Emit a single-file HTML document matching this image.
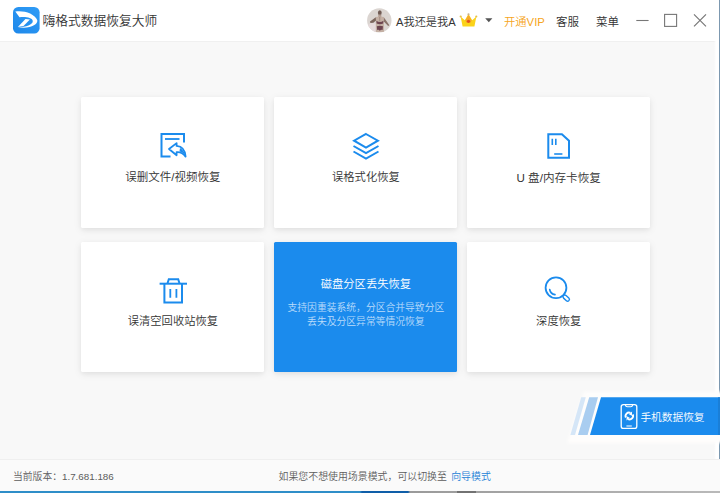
<!DOCTYPE html>
<html lang="zh-CN">
<head>
<meta charset="utf-8">
<title>嗨格式数据恢复大师</title>
<style>
html,body{margin:0;padding:0;}
body{width:720px;height:493px;overflow:hidden;position:relative;background:#f8f8f8;
 font-family:"Liberation Sans","Noto Sans CJK SC",sans-serif;color:#333;font-weight:350;}
.abs{position:absolute;}
.t{position:absolute;white-space:nowrap;line-height:1;}
#titlebar{left:0;top:0;width:720px;height:41px;background:#fff;border-bottom:1px solid #f0f0f0;}
.card{position:absolute;width:183px;height:130.5px;background:#fff;border-radius:1.5px;
 box-shadow:0 2px 9px rgba(0,0,0,0.075),0 2px 4px rgba(0,0,0,0.04);}
.card.blue{background:#1b8bed;}
.card.r2{height:129.9px;}
.ct{position:absolute;left:0;width:100%;text-align:center;font-size:11.3px;line-height:1;color:#333;white-space:nowrap;}
#footer{left:0;top:459px;width:720px;height:31px;background:#fafafa;border-top:1px solid #efefef;}
</style>
</head>
<body>

<!-- title bar -->
<div id="titlebar" class="abs"></div>
<svg class="abs" style="left:13px;top:7px" width="26.6" height="26.6" viewBox="0 0 100 100">
  <defs><linearGradient id="lg" x1="0" y1="1" x2="1" y2="0"><stop offset="0" stop-color="#1e88ea"/><stop offset="1" stop-color="#2f9cf6"/></linearGradient></defs>
  <rect x="0" y="0" width="100" height="100" rx="20" fill="url(#lg)"/>
  <g transform="translate(50,48) scale(1.06) translate(-50,-48)"><path d="M11,19 C40,14 80,26 89,50 C92,66 60,82 20,74 C50,73 73,66 73,52 C70,40 50,37 26,39 Z" fill="#fff"/>
  <path d="M47,45 L63,47 L40,70 L20,74 Z" fill="#fff"/></g>
</svg>
<div class="t" style="left:42.6px;top:14.9px;font-size:12.76px;color:#333;">嗨格式数据恢复大师</div>

<!-- avatar -->
<svg class="abs" style="left:367px;top:7.7px" width="25" height="25" viewBox="0 0 25 25">
  <defs><clipPath id="av"><circle cx="12.3" cy="12.4" r="12.2"/></clipPath>
  <filter id="bl" x="-20%" y="-20%" width="140%" height="140%"><feGaussianBlur stdDeviation="0.55"/></filter></defs>
  <g clip-path="url(#av)">
    <rect width="25" height="25" fill="#dbd5d1"/>
    <ellipse cx="6" cy="20" rx="6" ry="5" fill="#e6dadb"/>
    <g filter="url(#bl)">
      <ellipse cx="12.8" cy="4.7" rx="1.9" ry="2.5" fill="#6f5a52"/>
      <path d="M11.4,6.5 L14.2,6.5 L14.4,9 L11.2,9 Z" fill="#b09a8e"/>
      <path d="M8.8,9 Q12.8,7.8 16.8,9 L17,24 L8.8,24 Z" fill="#c4b0a4"/>
      <path d="M8.8,9.2 L3,13.4 L3.4,15 L6.4,14.8 L9,12.6 Z" fill="#7b655c"/>
      <path d="M16.8,9.2 L22.4,17.2 L21.2,18 L16.8,13.4 Z" fill="#8a736a"/>
      <path d="M9.4,12.8 Q12.8,15.2 16.4,12.8 L16.2,15.6 Q12.8,17 9.6,15.6 Z" fill="#6e4450"/>
      <path d="M9.8,18.2 Q12.8,17.4 16,18.2 L15.6,22 Q13.5,21.4 12.9,23 Q12.2,21.4 10.2,22 Z" fill="#6e4450"/>
      <path d="M12.5,9 L13.2,9 L13.1,13.5 L12.6,13.5 Z" fill="#8d756c"/>
    </g>
  </g>
</svg>
<div class="t" style="left:396px;top:16.5px;font-size:11.2px;color:#333;">A我还是我A</div>

<!-- crown -->
<svg class="abs" style="left:459px;top:13px" width="19" height="15" viewBox="0 0 19 15">
  <path d="M1.6,3.6 L5.8,7.2 L9.5,1 L13.2,7.2 L17.4,3.6 L15.4,13.6 L3.6,13.6 Z" fill="#fbd31a"/>
  <path d="M9.5,1.6 L12.6,7.6 L11.6,9.8 L7.4,9.8 L6.4,7.6 Z" fill="#f7a928"/>
  <circle cx="9.5" cy="8.3" r="1.6" fill="#e2531d"/>
  <circle cx="9.5" cy="1.3" r="1.1" fill="#c9b38a"/>
  <circle cx="1.7" cy="3.5" r="1.1" fill="#e6c04a"/>
  <circle cx="17.3" cy="3.5" r="1.1" fill="#e6c04a"/>
</svg>
<svg class="abs" style="left:485px;top:18.4px" width="8" height="5" viewBox="0 0 8 5"><path d="M0.2,0.3 L7.4,0.3 L3.8,4.2 Z" fill="#555"/></svg>

<div class="t" style="left:504px;top:16.5px;font-size:11.3px;color:#f6a522;">开通VIP</div>
<div class="t" style="left:556px;top:16.5px;font-size:11.5px;color:#333;">客服</div>
<div class="t" style="left:596px;top:16.5px;font-size:11.5px;color:#333;">菜单</div>

<!-- window buttons -->
<svg class="abs" style="left:629.5px;top:8px" width="84" height="26" viewBox="0 0 84 26">
  <path d="M6.3,12.5 H18.6" stroke="#777" stroke-width="1.1" fill="none"/>
  <rect x="34.6" y="6.4" width="12" height="12" stroke="#777" stroke-width="1.1" fill="none"/>
  <path d="M64,6.4 L76,18.4 M76,6.4 L64,18.4" stroke="#777" stroke-width="1.15" fill="none"/>
</svg>

<!-- cards row 1 -->
<div class="card" style="left:81.4px;top:97.3px;">
  <svg class="abs" style="left:75px;top:30px" width="36" height="36" viewBox="156 127 36 36" fill="none" stroke="#1b8bed" stroke-width="2">
    <path d="M184,142.5 V134 H161.5 V156.5 H170.5"/>
    <path d="M165,139 H179.5" stroke-width="1.8"/>
    <path d="M176.6,143.1 L169,149 L176.6,155.3 V152.2 Q181.8,151.6 185.6,156.6 Q184.8,146.6 176.6,145.9 Z" stroke-width="1.8" stroke-linejoin="round"/>
    <path d="M180,148 Q184,150 185.2,155.5 Q182.5,152 179.5,151.2 Z" fill="#1b8bed" stroke="none"/>
  </svg>
  <div class="ct" style="top:75px;font-size:11.5px;">误删文件/视频恢复</div>
</div>
<div class="card" style="left:274.4px;top:97.3px;">
  <svg class="abs" style="left:74px;top:30px" width="36" height="36" viewBox="348 127 36 36" fill="none" stroke="#1b8bed" stroke-width="2" stroke-linejoin="miter">
    <path d="M366,134 L377.9,140.7 L366,147.6 L354.1,140.7 Z"/>
    <path d="M353.5,146 L366,153 L378.5,146"/>
    <path d="M353.5,151.5 L366,158.5 L378.5,151.5"/>
  </svg>
  <div class="ct" style="top:75px;">误格式化恢复</div>
</div>
<div class="card" style="left:467.2px;top:97.3px;">
  <svg class="abs" style="left:74px;top:30px" width="36" height="36" viewBox="541 127 36 36" fill="none" stroke="#1b8bed" stroke-width="2">
    <path d="M548.3,134.3 H561.9 L569,140.8 V157.7 H548.3 Z"/>
    <path d="M552.3,138.7 V145 M555.8,138.7 V145" stroke-width="1.6"/>
    <path d="M554.2,154 H562.4" stroke-width="1.6"/>
  </svg>
  <div class="ct" style="top:75px;font-size:11.6px;">U 盘/内存卡恢复</div>
</div>

<!-- cards row 2 -->
<div class="card r2" style="left:81.4px;top:242.1px;">
  <svg class="abs" style="left:75px;top:30px" width="36" height="36" viewBox="156 272 36 36" fill="none" stroke="#1b8bed" stroke-width="2">
    <path d="M159.6,283.7 H187"/>
    <path d="M167.4,283.7 L168.8,279.3 H178.2 L179.6,283.7"/>
    <path d="M164.4,284 V302.6 H182 V284"/>
    <path d="M170.3,289 V297.7 M176.4,289 V297.7" stroke-width="1.8"/>
  </svg>
  <div class="ct" style="top:74px;">误清空回收站恢复</div>
</div>
<div class="card blue r2" style="left:274.4px;top:242.1px;">
  <div class="ct" style="top:37px;color:#fff;">磁盘分区丢失恢复</div>
  <div class="ct" style="top:61.3px;font-size:9.8px;color:#bcdcfb;">支持因重装系统，分区合并导致分区</div>
  <div class="ct" style="top:75.3px;font-size:9.8px;color:#bcdcfb;">丢失及分区异常等情况恢复</div>
</div>
<div class="card r2" style="left:467.2px;top:242.1px;">
  <svg class="abs" style="left:74px;top:30px" width="36" height="36" viewBox="541 272 36 36" fill="none" stroke="#1b8bed" stroke-width="1.8">
    <circle cx="556" cy="287.8" r="10.4"/>
    <path d="M549.7,289.5 Q550.5,294 555,294.6" stroke-width="1.6" stroke-linecap="round"/>
    <rect x="-1.8" y="-3.7" width="3.6" height="7.4" rx="1.8" transform="translate(566.2,298.1) rotate(-47)" stroke-width="1.4" fill="#fff"/>
  </svg>
  <div class="ct" style="top:74px;">深度恢复</div>
</div>

<!-- window edges -->
<div class="abs" style="left:714px;top:0;width:5px;height:490px;background:linear-gradient(90deg,rgba(255,255,255,0),#fff 40%);"></div>
<div class="abs" style="left:719px;top:0;width:1px;height:493px;background:#7c98b0;"></div>
<div class="abs" style="left:0;top:490px;width:720px;height:3px;background:linear-gradient(90deg,#2e8ec8 0,#2e8ec8 360px,#0f5ea8 362px,#0f5ea8 408px,#9a9a9a 410px,#b9b9b9 100%);"></div>
<div class="abs" style="left:0;top:489px;width:720px;height:1px;background:#e4eef6;"></div>


<div class="abs" style="left:457px;top:491px;width:19px;height:2px;background:#666;opacity:.8"></div>
<!-- phone recovery button -->
<svg class="abs" style="left:550px;top:380px" width="170" height="75" viewBox="550 380 170 75">
  <defs><filter id="hb" x="-10%" y="-20%" width="120%" height="140%"><feGaussianBlur stdDeviation="1.6"/></filter></defs>
  <polygon points="584,391.5 724,391.5 724,443 567,443" fill="#fefdfc" filter="url(#hb)"/>
</svg>
<svg class="abs" style="left:560px;top:390px" width="160" height="55" viewBox="560 390 160 55">
  <polygon points="601,397.3 720,397.3 720,434.9 590,434.9" fill="#1b8bed"/>
  <polygon points="589.2,397.3 598,397.3 587.6,434.9 578,434.9" fill="#a9cdf0"/>
  <polygon points="581.2,397.3 585.8,397.3 575,434.9 570.4,434.9" fill="#d5e6f7"/>
  <rect x="718" y="397.3" width="2" height="37.6" fill="#1a7fd8"/>
  <rect x="621.2" y="404.6" width="15.6" height="23.8" rx="2.2" fill="none" stroke="#fff" stroke-width="1.3"/>
  <path d="M625.3,405 Q625.8,406.7 627.3,406.7 H630.8 Q632.3,406.7 632.8,405" fill="none" stroke="#fff" stroke-width="1.1"/>
  <path d="M626.4,426 H631.8" stroke="#dfeefc" stroke-width="1.2"/>
  <g transform="translate(0.3,0.5)">
  <path d="M625.6,417 A3.5,3.5 0 0 1 630.2,412.3" fill="none" stroke="#fff" stroke-width="1.9"/>
  <path d="M632.4,414 A3.5,3.5 0 0 1 627.8,418.7" fill="none" stroke="#fff" stroke-width="1.9"/>
  <path d="M628.6,413.8 L631.8,411 L631.6,415.2 Z" fill="#fff"/>
  <path d="M629.4,417.2 L626.2,420 L626.4,415.8 Z" fill="#fff"/>
  </g>
</svg>
<div class="t" style="left:640.4px;top:411.5px;font-size:10.7px;color:#fff;">手机数据恢复</div>

<!-- footer -->
<div id="footer" class="abs"></div>
<div class="t" style="left:13px;top:472px;font-size:9.8px;color:#5c5c5c;">当前版本：1.7.681.186</div>
<div class="t" style="left:278.5px;top:472px;font-size:9.92px;color:#5c5c5c;">如果您不想使用场景模式，可以切换至 <span style="color:#1b7fd6;margin-left:1.5px;">向导模式</span></div>

</body>
</html>
